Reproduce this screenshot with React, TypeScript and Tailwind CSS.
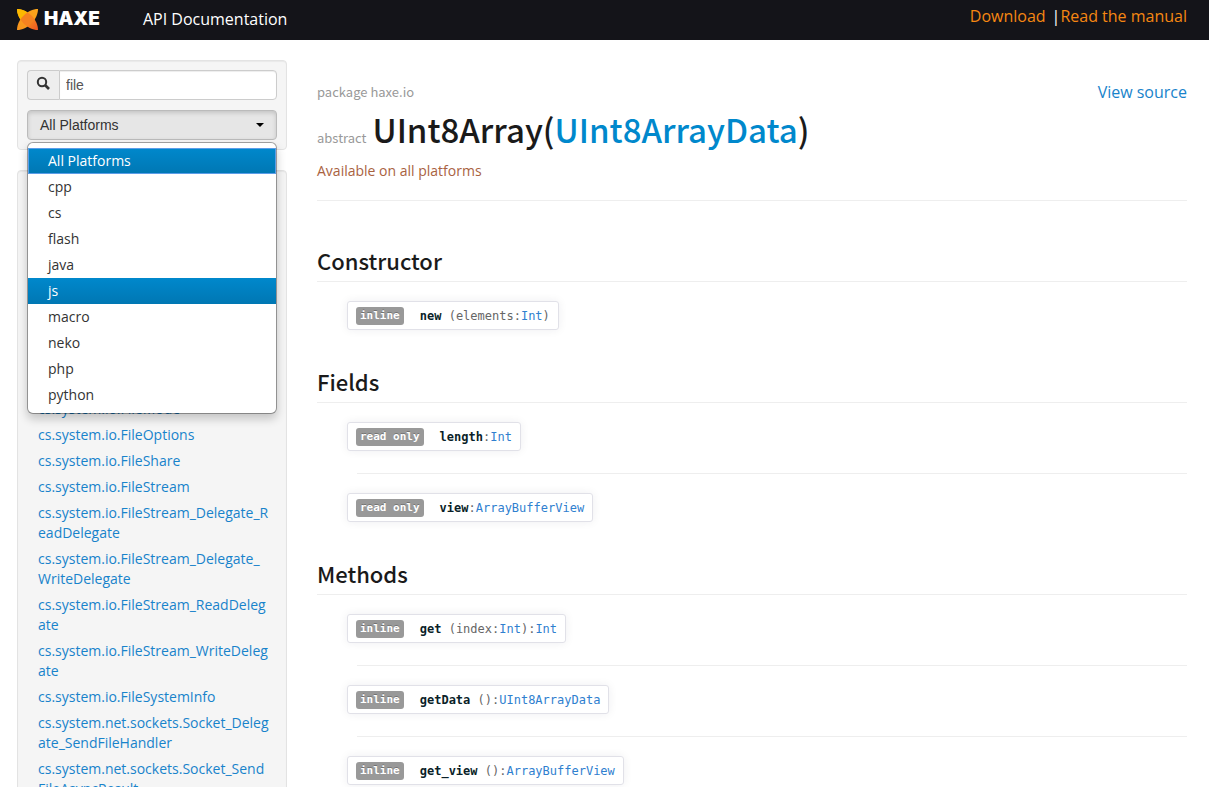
import { useState, type ReactNode } from "react";

const platforms = ["All Platforms", "cpp", "cs", "flash", "java", "js", "macro", "neko", "php", "python"];

const results = [
  "cs.system.io.FileMode",
  "cs.system.io.FileOptions",
  "cs.system.io.FileShare",
  "cs.system.io.FileStream",
  "cs.system.io.FileStream_Delegate_ReadDelegate",
  "cs.system.io.FileStream_Delegate_WriteDelegate",
  "cs.system.io.FileStream_ReadDelegate",
  "cs.system.io.FileStream_WriteDelegate",
  "cs.system.io.FileSystemInfo",
  "cs.system.net.sockets.Socket_Delegate_SendFileHandler",
  "cs.system.net.sockets.Socket_SendFileAsyncResult",
];

function Logo() {
  return (
    <a href="#home" className="flex items-center gap-[6px] text-white">
      <svg viewBox="0 0 42 42" className="h-[21px] w-[21px]" aria-hidden="true">
        <defs>
          <linearGradient id="petalA" x1="0" y1="0" x2="1" y2="1">
            <stop offset="0" stopColor="#fcb900" />
            <stop offset=".45" stopColor="#f8981d" />
            <stop offset="1" stopColor="#ef5323" />
          </linearGradient>
          <linearGradient id="petalB" x1="1" y1="0" x2="0" y2="1">
            <stop offset="0" stopColor="#fba51a" />
            <stop offset="1" stopColor="#f7941e" />
          </linearGradient>
        </defs>
        <path d="M42 0C42 21 21 42 0 42C0 21 21 0 42 0Z" fill="url(#petalB)" />
        <path d="M0 0C21 0 42 21 42 42C21 42 0 21 0 0Z" fill="url(#petalA)" />
        <path d="M0 0C8 0 15 3 21 7C14 12 10 17 7 21C3 15 0 8 0 0Z" fill="#fcb900" />
        <path d="M21 7C27 11 32 16 35 21C31 27 26 32 21 35C15 31 10 26 7 21C11 15 16 10 21 7Z" fill="#f58220" />
      </svg>
      <span className="font-['Inter',sans-serif] text-[19px] leading-[20px] font-black">HAXE</span>
    </a>
  );
}

function Header() {
  return (
    <header className="flex h-10 justify-between bg-[#141419] pr-[22px] pl-[17px]">
      <div className="flex items-center gap-[43px] pb-[2px]">
        <Logo />
        <a href="#api" className="text-base text-white">API Documentation</a>
      </div>
      <nav className="flex pt-1 text-base text-white">
        <a href="#download" className="text-[#f68712]">Download</a>
        <span className="pl-[6px]">|</span>
        <a href="#manual" className="text-[#f68712]">Read the manual</a>
      </nav>
    </header>
  );
}

function PlatformPicker() {
  const [open, setOpen] = useState(true);
  const [selected, setSelected] = useState("All Platforms");
  const [active, setActive] = useState("js");
  return (
    <div className="relative">
      <button
        type="button"
        aria-haspopup="listbox"
        aria-expanded={open}
        onClick={() => setOpen(!open)}
        className="flex h-[30px] w-full items-center justify-between rounded-[4px] border border-[#bbb] bg-[#e6e6e6] px-3 font-['Liberation_Sans',sans-serif] text-[14px] text-[#333] shadow-[inset_0_2px_4px_rgba(0,0,0,0.15)]"
      >
        {selected}
        <svg viewBox="0 0 8 4" className="h-1 w-2" aria-hidden="true">
          <path d="M0 0H8L4 4Z" fill="#000" />
        </svg>
      </button>
      {open && (
        <ul
          role="listbox"
          aria-label="Platform"
          className="absolute top-full right-0 left-0 z-10 mt-[2px] rounded-[6px] border border-[#00000055] bg-white bg-clip-padding py-[5px] shadow-[0_5px_10px_rgba(0,0,0,0.2)]"
        >
          {platforms.map((name) => (
            <li key={name} role="option" aria-selected={name === selected}>
              <button
                type="button"
                onMouseEnter={() => setActive(name)}
                onClick={() => setSelected(name)}
                className={
                  name === selected
                    ? "block w-full bg-linear-to-b from-[#0088cc] to-[#0077b3] px-5 py-[3px] text-left leading-[20px] text-white outline outline-[#5b9de8] -outline-offset-1"
                    : name === active
                      ? "block w-full bg-linear-to-b from-[#0088cc] to-[#0077b3] px-5 py-[3px] text-left leading-[20px] text-white"
                      : "block w-full px-5 py-[3px] text-left leading-[20px] text-[#333]"
                }
              >
                {name}
              </button>
            </li>
          ))}
        </ul>
      )}
    </div>
  );
}

function Sidebar() {
  return (
    <aside className="flex w-[270px] shrink-0 flex-col gap-5">
      <div className="flex flex-col gap-[10px] rounded-[4px] border border-[#e3e3e3] bg-[#f5f5f5] p-[9px] shadow-[inset_0_1px_1px_rgba(0,0,0,0.05)]">
        <div className="flex h-[30px]">
          <label
            htmlFor="search"
            aria-label="Search"
            className="flex w-8 shrink-0 rounded-l-[4px] border border-r-0 border-[#ccc] bg-[#eee] pt-[5px] pl-2"
          >
            <svg viewBox="0 0 14 14" className="h-[14px] w-[14px]" aria-hidden="true">
              <circle cx="6" cy="6" r="4.2" fill="none" stroke="#333" strokeWidth="2" />
              <path d="M9 9L13 13" stroke="#333" strokeWidth="2.6" />
            </svg>
          </label>
          <input
            id="search"
            type="text"
            defaultValue="file"
            className="min-w-0 flex-1 rounded-r-[4px] border border-[#ccc] bg-white px-[6px] font-['Liberation_Sans',sans-serif] text-[14px] text-[#555] shadow-[inset_0_1px_1px_rgba(0,0,0,0.075)] outline-none"
          />
        </div>
        <PlatformPicker />
      </div>
      <nav
        aria-label="Search results"
        className="rounded-[4px] border border-[#e3e3e3] bg-[#f5f5f5] pt-[225px] pr-[15px] pb-4 pl-5 shadow-[inset_0_1px_1px_rgba(0,0,0,0.05)]"
      >
        <ul>
          {results.map((name) => (
            <li key={name} className="py-[3px] leading-[20px] break-all">
              <a href={"#" + name} className="text-[#1883cb]">{name}</a>
            </li>
          ))}
        </ul>
      </nav>
    </aside>
  );
}

function Type({ children }: { children: string }) {
  return <a href={"#" + children} className="text-[#2f80cf]">{children}</a>;
}

function Member({ tag, name, children }: { tag: string; name: string; children: ReactNode }) {
  return (
    <div className="flex pl-[30px]">
      <code className="flex h-[29px] items-center rounded-[3px] border border-[#e1e1e8] bg-white px-2 font-['DejaVu_Sans_Mono',monospace] text-[12px] leading-[20px] whitespace-pre text-[#666] shadow-[0_0_10px_rgba(0,0,60,0.07)]">
        <span className="mr-4 rounded-[3px] bg-[#999] px-1 text-[11px] leading-[18px] font-bold text-white text-shadow-[0_-1px_0_rgba(0,0,0,0.25)]">{tag}</span>
        <span className="font-bold text-[#0b1f29]">{name}</span>
        <span>{children}</span>
      </code>
    </div>
  );
}

function Section({ title, children }: { title: string; children: ReactNode }) {
  return (
    <section className="mb-[34px]">
      <h2 className="mb-[19px] border-b border-[#eee] pb-1 font-['Noto_Sans_CJK_SC',sans-serif] text-[22px] leading-[34px] font-medium text-[#1a1a1a]">
        {title}
      </h2>
      {children}
    </section>
  );
}

function Divider() {
  return <hr className="mt-[22px] mb-[19px] ml-10 border-[#eee]" />;
}

export default function App() {
  return (
    <div className="h-screen overflow-hidden bg-white font-['Open_Sans',sans-serif] text-[14px] leading-[20px] text-[#333]">
      <Header />
      <div className="flex items-start gap-[30px] pt-5 pr-[22px] pl-[17px]">
        <Sidebar />
        <main className="min-w-0 flex-1 pt-5">
          <div className="flex h-6 items-center justify-between">
            <p className="font-['Noto_Sans_CJK_SC',sans-serif] text-[13px] text-[#999]">package haxe.io</p>
            <a href="#source" className="text-base text-[#1883cb]">View source</a>
          </div>
          <h1 className="flex items-baseline gap-[6px] font-['Noto_Sans_CJK_SC',sans-serif] text-[33px] leading-[50px] font-medium text-[#1a1a1a]">
            <small className="text-[13px] leading-[20px] font-normal text-[#999]">abstract</small>
            <span>
              UInt8Array(<a href="#UInt8ArrayData" className="text-[#0088cc]">UInt8ArrayData</a>)
            </span>
          </h1>
          <p className="pt-[7px] text-[#a9623f]">Available on all platforms</p>
          <hr className="mt-[19px] mb-[42px] border-[#eee]" />
          <Section title="Constructor">
            <Member tag="inline" name="new">
              {" (elements:"}<Type>Int</Type>)
            </Member>
          </Section>
          <Section title="Fields">
            <Member tag="read only" name="length">:<Type>Int</Type></Member>
            <Divider />
            <Member tag="read only" name="view">:<Type>ArrayBufferView</Type></Member>
          </Section>
          <Section title="Methods">
            <Member tag="inline" name="get">
              {" (index:"}<Type>Int</Type>):<Type>Int</Type>
            </Member>
            <Divider />
            <Member tag="inline" name="getData">
              {" ():"}<Type>UInt8ArrayData</Type>
            </Member>
            <Divider />
            <Member tag="inline" name="get_view">
              {" ():"}<Type>ArrayBufferView</Type>
            </Member>
          </Section>
        </main>
      </div>
    </div>
  );
}
